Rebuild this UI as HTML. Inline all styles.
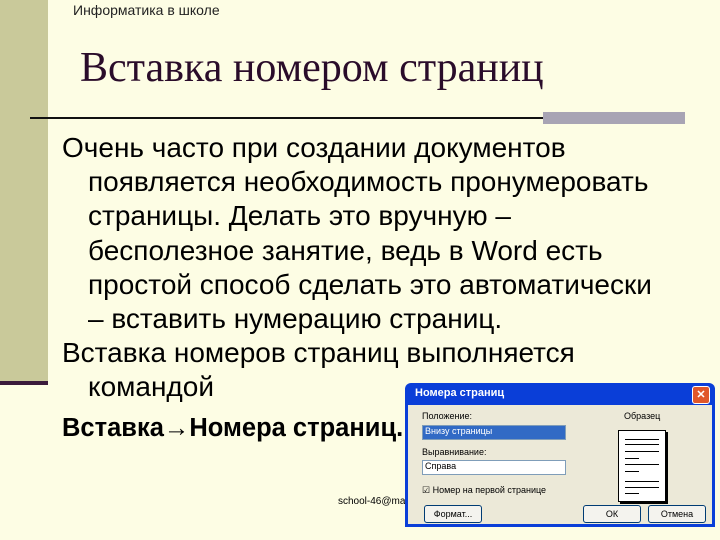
<!DOCTYPE html>
<html><head><meta charset="utf-8"><style>
body{margin:0;width:720px;height:540px;background:#fdfde4;position:relative;overflow:hidden;font-family:"Liberation Sans",sans-serif}
.side{position:absolute;left:0;top:0;width:48px;height:381px;background:#c9c99a}
.side2{position:absolute;left:0;top:381px;width:48px;height:4px;background:#3a1a3a}
.hdr{position:absolute;left:73px;top:2px;font-size:14px;color:#222}
.title{position:absolute;left:80px;top:44px;font-family:"Liberation Serif",serif;font-size:42px;color:#2a0c2a}
.hl{position:absolute;left:30px;top:117px;width:515px;height:2px;background:#111}
.gb{position:absolute;left:543px;top:112px;width:142px;height:12px;background:#a8a4b4}
.txt{position:absolute;left:62px;top:131px;width:660px;font-size:28px;line-height:34.2px;color:#000;white-space:nowrap}
.txt div.i{padding-left:26px}
.dlg{position:absolute;left:405px;top:383px;width:310px;height:144px;background:#0a3ed8;border-radius:6px 6px 0 0}
.dbody{position:absolute;left:3px;top:22px;right:3px;bottom:3px;background:#ece9d8;font-size:9px;color:#000}
.dt{position:absolute;left:10px;top:4px;color:#fff;font-size:11px;font-weight:bold}
.x{position:absolute;right:5px;top:3px;width:16px;height:16px;background:#e0572a;border:1px solid #fff;border-radius:3px;color:#fff;font-size:11px;text-align:center;line-height:16px;font-weight:bold}
.sel{position:absolute;background:#fff;border:1px solid #7f9db9;height:13px}
.btn{position:absolute;height:16px;border:1px solid #003c74;border-radius:3px;background:#f4f3ee;text-align:center;line-height:16px;font-size:9px}
.prev{position:absolute;left:210px;top:25px;width:46px;height:70px;background:#fff;border:1px solid #000;box-shadow:2px 2px 0 #000}
.prev i{position:absolute;left:6px;height:1px;background:#000}
</style></head><body>
<div class="side"></div><div class="side2"></div>
<div class="hdr">Информатика в школе</div>
<div class="title">Вставка номером страниц</div>
<div class="hl"></div><div class="gb"></div>
<div class="txt">
<div>Очень часто при создании документов</div>
<div class="i">появляется необходимость пронумеровать</div>
<div class="i">страницы. Делать это вручную –</div>
<div class="i">бесполезное занятие, ведь в Word есть</div>
<div class="i">простой способ сделать это автоматически</div>
<div class="i">– вставить нумерацию страниц.</div>
<div>Вставка номеров страниц выполняется</div>
<div class="i">командой</div>
<div style="font-weight:bold;font-size:25.5px;margin-top:6px">Вставка→Номера страниц.</div>
</div>
<div style="position:absolute;left:338px;top:496px;font-size:10px">school-46@mail.ru</div>
<div class="dlg"><div class="dt">Номера страниц</div><div class="x">✕</div>
<div class="dbody">
<div style="position:absolute;left:14px;top:6px">Положение:</div>
<div class="sel" style="left:14px;top:20px;width:140px;background:#316ac5;color:#fff;padding-left:2px">Внизу страницы</div>
<div style="position:absolute;left:14px;top:42px">Выравнивание:</div>
<div class="sel" style="left:14px;top:55px;width:140px;padding-left:2px">Справа</div>
<div style="position:absolute;left:14px;top:80px">☑ Номер на первой странице</div>
<div style="position:absolute;left:216px;top:6px">Образец</div>
<div class="prev"><i style="top:8px;width:34px"></i><i style="top:13px;width:34px"></i><i style="top:20px;width:34px"></i><i style="top:27px;width:14px"></i><i style="top:33px;width:34px"></i><i style="top:40px;width:14px"></i><i style="top:50px;width:34px"></i><i style="top:56px;width:34px"></i><i style="top:62px;width:14px"></i></div>
<div class="btn" style="left:16px;top:100px;width:56px">Формат...</div>
<div class="btn" style="left:175px;top:100px;width:56px">ОК</div>
<div class="btn" style="left:240px;top:100px;width:56px">Отмена</div>
</div></div>
</body></html>
